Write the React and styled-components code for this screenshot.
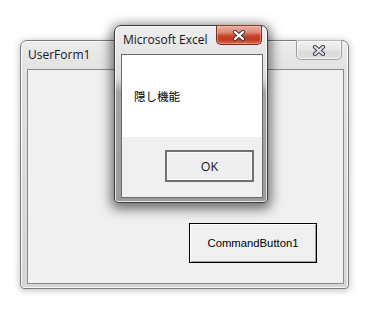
import React from "react";
import styled, { createGlobalStyle } from "styled-components";

const Global = createGlobalStyle`
  html, body { margin: 0; padding: 0; background: #ffffff; }
  body { font-family: "Open Sans", "Noto Sans", sans-serif; }
`;

const Desktop = styled.div`
  position: relative;
  width: 372px;
  height: 310px;
  overflow: hidden;
  background: #ffffff;
`;

const Window = styled.div`
  position: absolute;
  left: ${(p) => p.$x}px;
  top: ${(p) => p.$y}px;
  width: ${(p) => p.$w}px;
  height: ${(p) => p.$h}px;
  box-sizing: border-box;
  display: flex;
  flex-direction: column;
  border: 1px solid ${(p) => (p.$active ? "#3c3c3c" : "#7c7c7c")};
  border-radius: 7px 7px 4px 4px;
  padding: 0 4px 4px 6px;
  background: ${(p) =>
    p.$active
      ? "linear-gradient(to bottom, #eeeeee 0px, #dedede 50px, #c8c8c8 58px, #a4a4a4 66px, #9c9c9c 100%)"
      : "linear-gradient(to bottom, #ececec 0px, #e2e2e2 30px, #d6d6d6 100%)"};
  box-shadow: ${(p) =>
    p.$active
      ? "inset 0 0 0 1px rgba(255,255,255,0.75), 0 3px 12px 3px rgba(0,0,0,0.55)"
      : "inset 0 0 0 1px rgba(255,255,255,0.8), 0 1px 6px 1px rgba(0,0,0,0.22)"};
  z-index: ${(p) => (p.$active ? 2 : 1)};
`;

const TitleBar = styled.div`
  height: 28px;
  flex: none;
  display: flex;
  align-items: flex-start;
`;

const Title = styled.span`
  padding-left: ${(p) => p.$pad}px;
  margin-top: ${(p) => p.$top}px;
  font-family: "Open Sans", "Noto Sans", sans-serif;
  font-size: 12px;
  line-height: 16px;
  color: #111418;
  white-space: nowrap;
`;

const CloseButton = styled.div`
  margin-left: auto;
  margin-top: -1px;
  margin-right: ${(p) => p.$mr}px;
  width: 46px;
  height: 20px;
  flex: none;
  box-sizing: border-box;
  display: flex;
  align-items: center;
  justify-content: center;
  border-radius: 0 0 5px 5px;
  border: 1px solid ${(p) => (p.$red ? "#7e2a1e" : "#9c9c9c")};
  border-top-color: ${(p) => (p.$red ? "#8c3a2c" : "#b8b8b8")};
  background: ${(p) =>
    p.$red
      ? "linear-gradient(to bottom, #eab0a4 0%, #dc8a78 35%, #c9442c 55%, #c23a22 75%, #d86a50 100%)"
      : "linear-gradient(to bottom, #f2f2f2 0%, #e6e6e6 50%, #dadada 55%, #dedede 100%)"};
  box-shadow: inset 0 0 0 1px ${(p) => (p.$red ? "rgba(255,200,190,0.45)" : "rgba(255,255,255,0.7)")};
`;

const Client = styled.div`
  flex: 1;
  box-sizing: border-box;
  border: 1px solid ${(p) => (p.$dark ? "#6a6a6a" : "#8a8a8a")};
  background: #f0f0f0;
  display: flex;
  flex-direction: column;
`;

const FormBody = styled(Client)`
  justify-content: flex-end;
  align-items: flex-end;
  padding: 0 26px 20px 0;
`;

const MessageArea = styled.div`
  height: 82px;
  flex: none;
  background: #ffffff;
  display: flex;
  align-items: flex-start;
  padding: 34px 0 0 12px;
  box-sizing: border-box;
`;

const MessageText = styled.span`
  font-family: "Noto Sans CJK JP", "Noto Sans", sans-serif;
  font-size: 11.5px;
  line-height: 14px;
  color: #000;
`;

const ButtonArea = styled.div`
  flex: 1;
  display: flex;
  justify-content: flex-end;
  align-items: flex-start;
  padding: 13px 8px 0 0;
`;

const OkButton = styled.div`
  width: 89px;
  height: 32px;
  box-sizing: border-box;
  border: 2px solid #707070;
  background: #efefef;
  box-shadow: inset 0 0 0 1px #f8f8f8;
  display: flex;
  align-items: center;
  justify-content: center;
  font-family: "Open Sans", "Noto Sans", sans-serif;
  font-size: 12.5px;
  color: #111;
`;

const CommandButton = styled.div`
  width: 128px;
  height: 40px;
  box-sizing: border-box;
  border: 1px solid #000;
  background: #f0f0f0;
  box-shadow: inset 1px 1px 0 #ffffff, inset -1px -1px 0 #a0a0a0;
  display: flex;
  align-items: center;
  justify-content: center;
  font-family: "Liberation Sans", Arial, sans-serif;
  font-size: 11.3px;
  color: #000;
`;

const CloseGlyph = ({ light }) => (
  <svg width="14" height="11" viewBox="0 0 14 11">
    <path d="M3 2 L11 9 M11 2 L3 9" stroke="#3a3f48" strokeWidth="4.2" strokeLinecap="round" fill="none" />
    <path d="M3 2 L11 9 M11 2 L3 9" stroke={light ? "#e6e8ec" : "#ffffff"} strokeWidth="2.2" strokeLinecap="round" fill="none" />
  </svg>
);

export default function App() {
  return (
    <>
      <Global />
      <Desktop>
        <Window $x={20} $y={40} $w={329} $h={249}>
          <TitleBar>
            <Title $pad={1} $top={6}>UserForm1</Title>
            <CloseButton $mr={2}>
              <CloseGlyph light />
            </CloseButton>
          </TitleBar>
          <FormBody>
            <CommandButton>CommandButton1</CommandButton>
          </FormBody>
        </Window>

        <Window $active $x={114} $y={25} $w={154} $h={178}>
          <TitleBar>
            <Title $pad={2} $top={6}>Microsoft Excel</Title>
            <CloseButton $red $mr={1}>
              <CloseGlyph />
            </CloseButton>
          </TitleBar>
          <Client $dark>
            <MessageArea>
              <MessageText>隠し機能</MessageText>
            </MessageArea>
            <ButtonArea>
              <OkButton>OK</OkButton>
            </ButtonArea>
          </Client>
        </Window>
      </Desktop>
    </>
  );
}
